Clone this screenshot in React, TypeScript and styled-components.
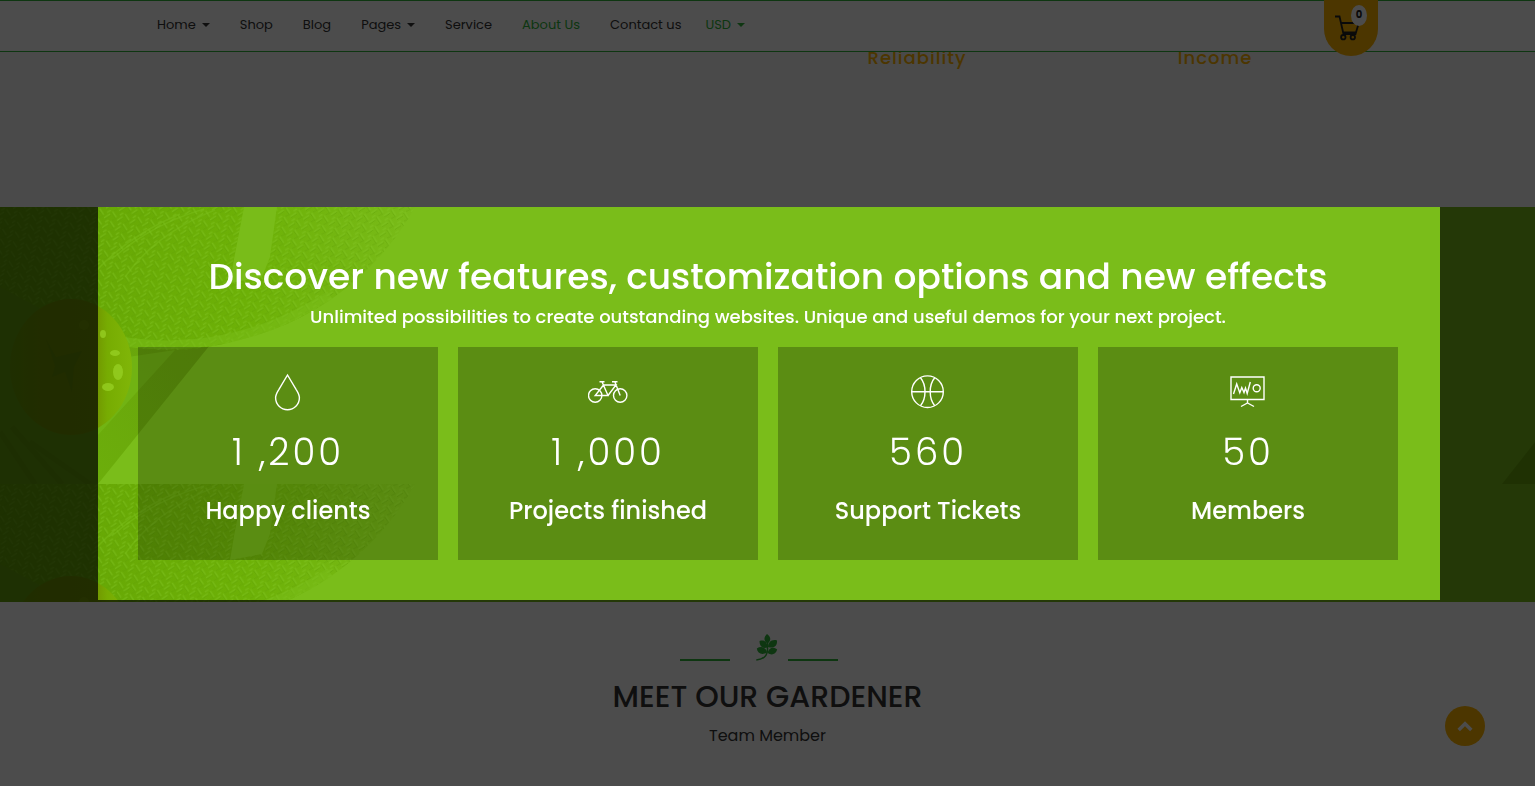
import React from "react";
import styled, { createGlobalStyle } from "styled-components";

const GlobalStyle = createGlobalStyle`
  * { box-sizing: border-box; }
  html, body { margin: 0; padding: 0; background: #fff; }
  body { font-family: Poppins, Inter, "Open Sans", sans-serif; color: #333; overflow-x: hidden; }
  h2, h3, p { margin: 0; font-weight: 500; }
`;

const Header = styled.header`
  position: fixed;
  inset: 0 0 auto 0;
  z-index: 10;
  display: flex;
  justify-content: space-between;
  height: 52px;
  padding: 0 157px;
  background: #fff;
  border-top: 1px solid #2fb53a;
  border-bottom: 1px solid #2fb53a;
`;

const Nav = styled.nav`
  display: flex;
  align-items: center;
  gap: 30px;
  height: 47px;
`;

const NavLink = styled.a<{ $active?: boolean }>`
  display: flex;
  align-items: center;
  gap: 6px;
  font-size: 13px;
  line-height: 20px;
  color: ${(p) => (p.$active ? "#2fb53a" : "#333")};
  text-decoration: none;
`;

const CurrencyButton = styled.button`
  display: flex;
  align-items: center;
  gap: 6px;
  margin-left: -6px;
  padding: 0;
  border: 0;
  background: none;
  font: inherit;
  font-size: 13px;
  line-height: 20px;
  color: #2fb53a;
`;

const Caret = styled.span`
  border: 4px solid transparent;
  border-top-color: currentColor;
  border-bottom: 0;
`;

const CartButton = styled.button`
  position: relative;
  width: 54px;
  height: 56px;
  margin-top: -1px;
  padding: 0;
  border: 0;
  border-radius: 0 0 27px 27px;
  background: #ffb400;
  font-family: inherit;
  svg { display: block; }
`;

const CartCount = styled.span`
  position: absolute;
  top: 5px;
  right: 11px;
  width: 16px;
  height: 21px;
  border-radius: 50%;
  background: #fff;
  color: #222;
  font-size: 10px;
  line-height: 20px;
  font-weight: 700;
  text-align: center;
`;

const Features = styled.section`
  display: grid;
  grid-template-columns: repeat(4, 1fr);
  height: 207px;
  padding: 46px 171px 0 172px;
  background: #f7f7f7;
`;

const FeatureName = styled.h3<{ $column: number }>`
  grid-column: ${(p) => p.$column};
  font-size: 18px;
  line-height: 24px;
  letter-spacing: 1px;
  text-align: center;
  color: #ffb400;
`;

const Band = styled.section`
  position: relative;
  padding: 0 95px 2px 98px;
  background: #7abd1a;
`;

const BandArt = styled.svg`
  position: absolute;
  inset: 0;
  width: 100%;
  height: 100%;
`;

const Spotlight = styled.div`
  position: relative;
  z-index: 20;
  padding: 48px 42px 40px 40px;
  box-shadow: 0 0 0 200vmax rgba(0, 0, 0, 0.7);
  text-align: center;
  color: #fff;
`;

const BandTitle = styled.h2`
  font-size: 36px;
  line-height: 44px;
`;

const BandText = styled.p`
  margin: 5px 0 17px;
  font-size: 18px;
  line-height: 26px;
`;

const Counters = styled.div`
  display: grid;
  grid-template-columns: repeat(4, 1fr);
  gap: 20px;
`;

const Counter = styled.div`
  display: flex;
  flex-direction: column;
  align-items: center;
  padding: 25px 10px 34px;
  background: rgba(0, 0, 0, 0.25);
`;

const CounterIcon = styled.svg`
  width: 40px;
  height: 40px;
  fill: none;
  stroke: #fff;
  stroke-width: 1.4;
`;

const CounterValue = styled.div`
  margin-top: 16px;
  font-size: 37px;
  line-height: 48px;
  font-weight: 300;
  letter-spacing: 3px;
`;

const CounterLabel = styled.h3`
  margin-top: 20px;
  font-size: 24px;
  line-height: 30px;
`;

const Team = styled.section`
  display: flex;
  flex-direction: column;
  align-items: center;
  padding: 32px 0 38px;
`;

const Divider = styled.div`
  display: flex;
  align-items: flex-end;
  gap: 10px;
  padding-right: 17px;
  svg { margin-left: 16px; }
`;

const Rule = styled.span`
  width: 50px;
  height: 2px;
  background: #2fb53a;
`;

const TeamTitle = styled.h2`
  margin-top: 16px;
  font-size: 30px;
  line-height: 40px;
`;

const TeamText = styled.p`
  margin-top: 7px;
  font-size: 16px;
  line-height: 24px;
  font-weight: 400;
`;

const TopButton = styled.button`
  position: fixed;
  right: 50px;
  bottom: 40px;
  z-index: 10;
  width: 40px;
  height: 40px;
  padding: 0;
  border: 0;
  border-radius: 50%;
  background: #ffb400;
  svg { display: block; }
`;

const links = [
  { label: "Home", caret: true },
  { label: "Shop" },
  { label: "Blog" },
  { label: "Pages", caret: true },
  { label: "Service" },
  { label: "About Us", active: true },
  { label: "Contact us" },
];

const counters = [
  {
    value: "1 ,200",
    label: "Happy clients",
    icon: (
      <path d="M19.5 3 10.8 17.600C8.600 21 7.600 23 7.600 25.800a11.900 11.900 0 0 0 23.800 0c0-2.800-1-4.800-3.200-8.200Z" />
    ),
  },
  {
    value: "1 ,000",
    label: "Projects finished",
    icon: (
      <>
        <circle cx="7.200" cy="23.500" r="6.700" />
        <circle cx="32.200" cy="23.500" r="6.700" />
        <path d="M11.500 9.700H16.500M14 9.700 20 23.500H7.200L15.500 13H28L20 23.500M24 9.700H29.500M26.800 9.700 32.200 23.500" />
      </>
    ),
  },
  {
    value: "560",
    label: "Support Tickets",
    icon: (
      <>
        <circle cx="19.500" cy="19.700" r="15.800" />
        <path d="M3.700 19.700H35.300M12.500 5.700C18.500 13 18.500 26.400 12.500 33.700M26.700 5.700C20.700 13 20.700 26.400 26.700 33.700" />
      </>
    ),
  },
  {
    value: "50",
    label: "Members",
    icon: (
      <>
        <path d="M3 5H36V27.500H3ZM19.500 27.500V31M13 34.500 19.500 31 26 34.500" />
        <path d="M5.500 22 8.700 12 11.800 20.800 13.800 15.500 16 20.500 17.500 16 19.200 21.500 22.300 10" />
        <circle cx="28.700" cy="16.300" r="3.500" />
      </>
    ),
  },
];

function BandBackground() {
  return (
    <BandArt aria-hidden="true">
      <defs>
        <pattern id="weave" width="13" height="10" patternUnits="userSpaceOnUse" patternTransform="rotate(12)">
          <path d="M0 9 5 4M7 1 12 6M2 3 5 0" stroke="#84c828" strokeWidth="1.200" opacity="0.45" />
          <path d="M1 10 6 5M6 2 11 7M8 10 12 7" stroke="#5c9c05" strokeWidth="1" opacity="0.4" />
        </pattern>
        <linearGradient id="brim" x1="0" x2="1">
          <stop offset="0" stopColor="#64a304" />
          <stop offset="0.600" stopColor="#6db107" />
          <stop offset="1" stopColor="#79bb19" />
        </linearGradient>
        <linearGradient id="wood" x1="0" x2="1" y1="1" y2="0">
          <stop offset="0" stopColor="#6cae0b" />
          <stop offset="1" stopColor="#68a20c" />
        </linearGradient>
        <linearGradient id="tomato" x1="0" x2="1">
          <stop offset="0" stopColor="#689c04" />
          <stop offset="0.300" stopColor="#709400" />
          <stop offset="0.700" stopColor="#719600" />
          <stop offset="0.800" stopColor="#77ac02" />
          <stop offset="1" stopColor="#80b608" />
        </linearGradient>
        <g id="scene">
          <path d="M0 0H98V277H0Z" fill="#67a00b" />
          <path d="M98 138H210L98 277Z" fill="url(#wood)" />
          <path d="M128 150 175 143 98 228V190Z" fill="#75b817" opacity="0.7" />
          <path d="M0 0H415C385 55 330 105 260 127C205 145 150 150 98 132L0 80Z" fill="url(#brim)" />
          <path d="M0 0H415C385 55 330 105 260 127C205 145 150 150 98 132L0 80Z" fill="url(#weave)" />
          <path d="M98 130C170 146 250 140 330 88" fill="none" stroke="#7abd1a" strokeWidth="9" opacity="0.5" />
          <path d="M244 0H277L270 50 262 70 230 76 234 52Z" fill="#79bc19" />
          <path d="M112 52Q150 18 204 2M125 70Q155 27 215 3M98 62Q130 28 180 7" fill="none" stroke="#7abd1a" strokeWidth="1.500" opacity="0.5" />
          <ellipse cx="71" cy="160" rx="61" ry="68" fill="url(#tomato)" />
          <path d="M46 132 56 150 82 144 74 160 72 186 65 165 52 170 55 159Z" fill="#5d8c0a" opacity="0.5" />
          <g fill="#96cf22" opacity="0.8">
            <ellipse cx="103" cy="127" rx="3" ry="4" />
            <ellipse cx="115" cy="146" rx="5" ry="3" />
            <ellipse cx="118" cy="165" rx="5" ry="8" />
            <ellipse cx="108" cy="180" rx="6" ry="4" />
            <ellipse cx="84" cy="118" rx="5" ry="5" opacity="0.2" />
          </g>
          <path d="M0 225 35 277M12 220 62 277M30 235 90 277" stroke="#568b05" strokeWidth="5" opacity="0.3" />
          <path d="M1502 277 1535 235V277Z" fill="#6aa60c" />
        </g>
      </defs>
      <use href="#scene" />
      <use href="#scene" y="277" />
    </BandArt>
  );
}

export default function App() {
  return (
    <>
      <GlobalStyle />
      <Header>
        <Nav>
          {links.map((l) => (
            <NavLink key={l.label} href="#" $active={l.active}>
              {l.label}
              {l.caret && <Caret />}
            </NavLink>
          ))}
          <CurrencyButton>
            USD
            <Caret />
          </CurrencyButton>
        </Nav>
        <CartButton aria-label="Cart">
          <svg width="54" height="56" viewBox="0 0 54 56" fill="none" stroke="#222" strokeWidth="1.800">
            <path d="M11 16.500H15.500L19.500 34H31.500L34.500 24M16.500 23H34M18.500 32.500H32" />
            <circle cx="19.300" cy="37.200" r="2.200" />
            <circle cx="28.800" cy="37.200" r="2.200" />
          </svg>
          <CartCount>0</CartCount>
        </CartButton>
      </Header>
      <main>
        <Features>
          <FeatureName $column={3}>Reliability</FeatureName>
          <FeatureName $column={4}>Income</FeatureName>
        </Features>
        <Band>
          <BandBackground />
          <Spotlight>
            <BandTitle>Discover new features, customization options and new effects</BandTitle>
            <BandText>
              Unlimited possibilities to create outstanding websites. Unique and useful demos for your next project.
            </BandText>
            <Counters>
              {counters.map((c) => (
                <Counter key={c.label}>
                  <CounterIcon viewBox="0 0 40 40" aria-hidden="true">{c.icon}</CounterIcon>
                  <CounterValue>{c.value}</CounterValue>
                  <CounterLabel>{c.label}</CounterLabel>
                </Counter>
              ))}
            </Counters>
          </Spotlight>
        </Band>
        <Team>
          <Divider>
            <Rule />
            <svg width="22" height="27" viewBox="0 0 22 27" fill="#2fb53a" aria-hidden="true">
              <path d="M11 0C15.500 3 15 7 11.500 9.500C7.500 7 7.500 3 11 0Z" />
              <path d="M3.500 7C8.500 5.500 11.500 8 11.200 13.500C6.500 15 3.500 12 3.500 7Z" />
              <path d="M21 6.500C21.500 12 17.500 15 12 13C12 8 16 5 21 6.500Z" />
              <path d="M.8 14.500C5 11.500 10.500 13.500 11 18.500C6 21.500 1.500 19.500 .8 14.500Z" />
              <path d="M21.200 15.500C19.500 21 15 21.500 11.500 18.800C13 14 17 12 21.200 15.500Z" />
              <path d="M11.500 5V16Q11 25 .3 26" fill="none" stroke="#2fb53a" strokeWidth="1.500" />
            </svg>
            <Rule />
          </Divider>
          <TeamTitle>MEET OUR GARDENER</TeamTitle>
          <TeamText>Team Member</TeamText>
        </Team>
      </main>
      <TopButton aria-label="Back to top">
        <svg width="40" height="40" viewBox="0 0 40 40" fill="none" stroke="#fff" strokeWidth="3.500">
          <path d="M13.700 24 20 17.800 26.300 24" />
        </svg>
      </TopButton>
    </>
  );
}
